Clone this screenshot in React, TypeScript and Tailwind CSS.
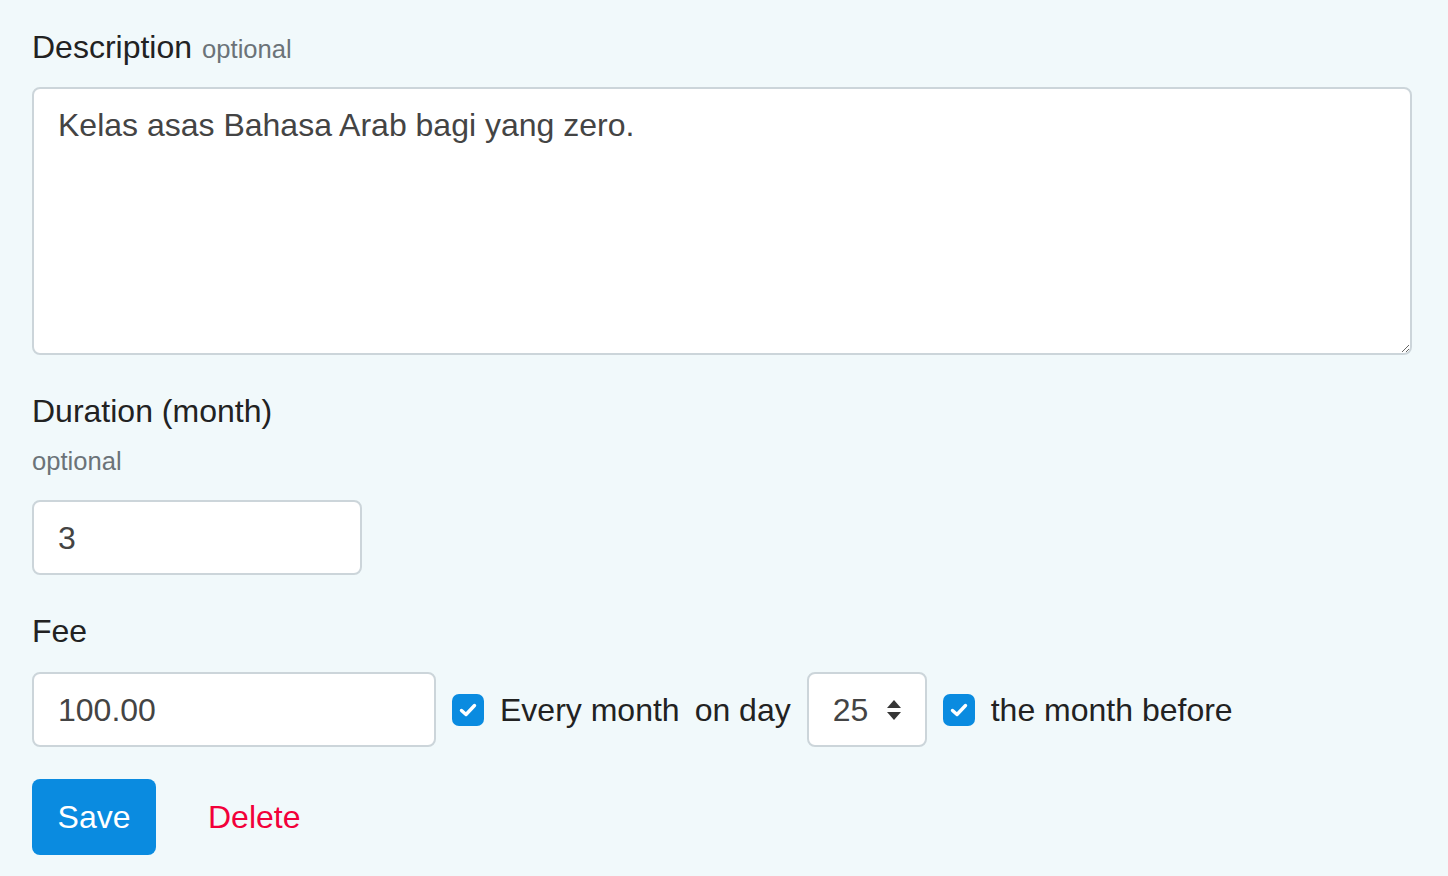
import React from 'react';

const Check: React.FC = () => (
  <span className="flex h-8 w-8 shrink-0 items-center justify-center rounded-[7px] bg-[#0a8be0]">
    <svg width="18" height="14" viewBox="0 0 18 14" fill="none">
      <path d="M2.5 7.5 L7 11.5 L15.5 2.5" stroke="white" strokeWidth="3.4" strokeLinecap="round" strokeLinejoin="round" />
    </svg>
  </span>
);

const App: React.FC = () => {
  return (
    <div className="min-h-screen w-full bg-[#f1f9fb] px-8 pt-[23px] text-[32px] text-[#222] font-['Liberation_Sans',Arial,sans-serif]">
      {/* Description */}
      <div className="flex items-baseline gap-[10px] leading-[48px]">
        <span>Description</span>
        <span className="text-[25.6px] text-[#6b7378]">optional</span>
      </div>
      <textarea
        defaultValue="Kelas asas Bahasa Arab bagi yang zero."
        className="mt-[14px] block h-[268px] w-[1380px] resize-y rounded-[8px] border-2 border-[#ccd5da] bg-white px-[24px] pt-[16px] text-[32px] leading-[40px] text-[#444] outline-none"
      />

      {/* Duration */}
      <div className="mt-[32px] leading-[48px]">Duration (month)</div>
      <div className="mt-[7px] text-[25.6px] leading-[38px] text-[#6b7378]">optional</div>
      <div className="mt-[20px] flex h-[75px] w-[330px] items-center rounded-[8px] border-2 border-[#ccd5da] bg-white px-[24px] text-[#444]">
        3
      </div>

      {/* Fee */}
      <div className="mt-[32px] leading-[48px]">Fee</div>
      <div className="mt-[17px] flex h-[75px] items-center">
        <div className="flex h-full w-[404px] items-center rounded-[8px] border-2 border-[#ccd5da] bg-white px-[24px] text-[#444]">
          100.00
        </div>
        <div className="ml-[16px]">
          <Check />
        </div>
        <span className="ml-[16px]">Every month</span>
        <span className="ml-[15px]">on day</span>
        <div className="ml-[16px] flex h-full w-[120px] items-center justify-between rounded-[8px] border-2 border-[#ccd5da] bg-white pl-[24px] pr-[23px] text-[#444]">
          <span>25</span>
          <svg width="16" height="22" viewBox="0 0 16 22">
            <path d="M8 1 L15 9 L1 9 Z" fill="#363636" />
            <path d="M1 13 L15 13 L8 21 Z" fill="#363636" />
          </svg>
        </div>
        <div className="ml-[16px]">
          <Check />
        </div>
        <span className="ml-[16px]">the month before</span>
      </div>

      {/* Actions */}
      <div className="mt-[32px] flex items-center">
        <button className="flex h-[76px] w-[124px] items-center justify-center rounded-[8px] bg-[#0a8be0] text-white">
          Save
        </button>
        <button className="ml-[52px] text-[#f2003a]">Delete</button>
      </div>
    </div>
  );
};

export default App;
